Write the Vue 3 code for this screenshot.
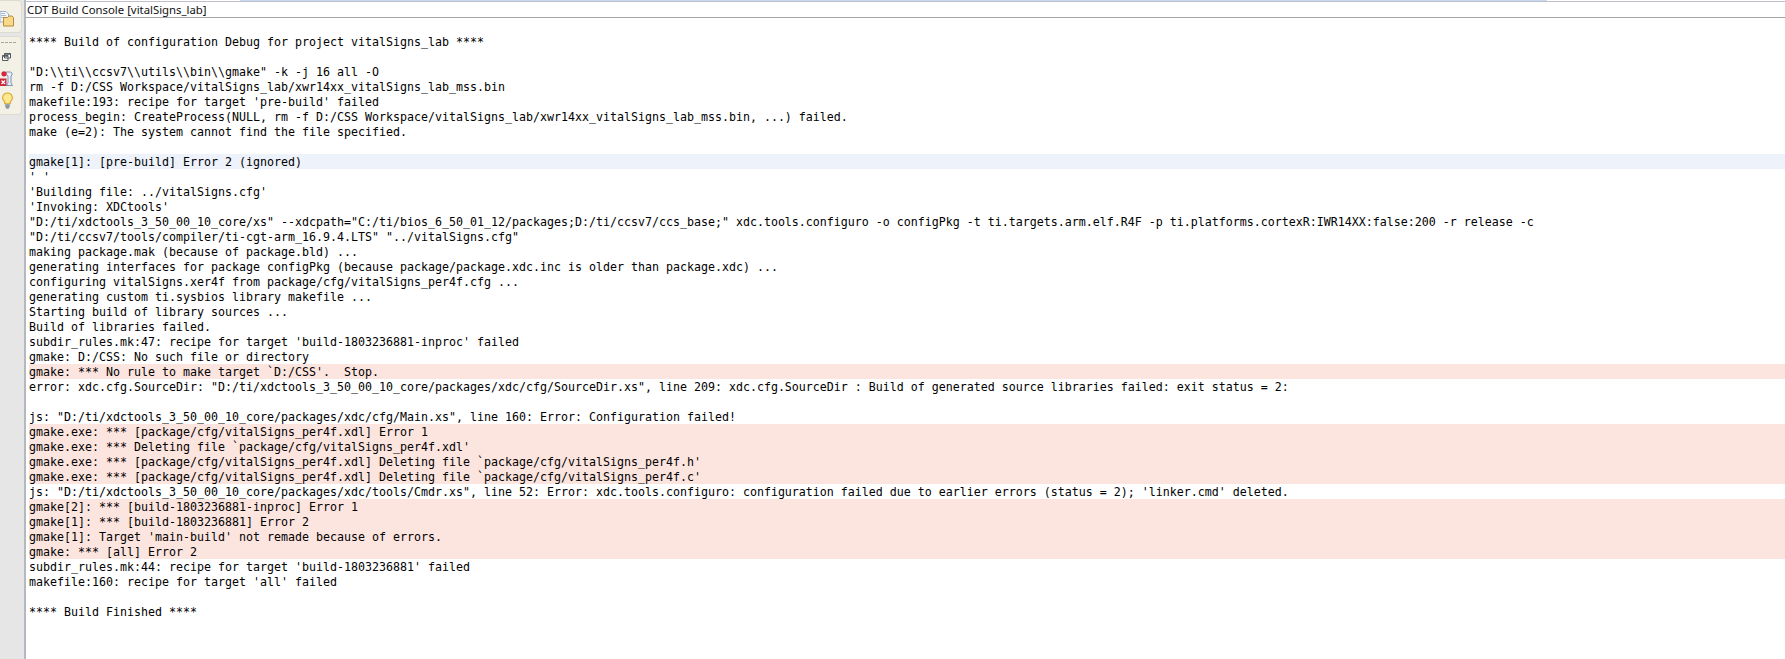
<script setup>
const lines = [
  ['**** Build of configuration Debug for project vitalSigns_lab ****', ''],
  ['', ''],
  ['"D:\\\\ti\\\\ccsv7\\\\utils\\\\bin\\\\gmake" -k -j 16 all -O', ''],
  ['rm -f D:/CSS Workspace/vitalSigns_lab/xwr14xx_vitalSigns_lab_mss.bin', ''],
  ["makefile:193: recipe for target 'pre-build' failed", ''],
  ['process_begin: CreateProcess(NULL, rm -f D:/CSS Workspace/vitalSigns_lab/xwr14xx_vitalSigns_lab_mss.bin, ...) failed.', ''],
  ['make (e=2): The system cannot find the file specified.', ''],
  ['', ''],
  ['gmake[1]: [pre-build] Error 2 (ignored)', 'warn'],
  ["' '", ''],
  ["'Building file: ../vitalSigns.cfg'", ''],
  ["'Invoking: XDCtools'", ''],
  ['"D:/ti/xdctools_3_50_00_10_core/xs" --xdcpath="C:/ti/bios_6_50_01_12/packages;D:/ti/ccsv7/ccs_base;" xdc.tools.configuro -o configPkg -t ti.targets.arm.elf.R4F -p ti.platforms.cortexR:IWR14XX:false:200 -r release -c', ''],
  ['"D:/ti/ccsv7/tools/compiler/ti-cgt-arm_16.9.4.LTS" "../vitalSigns.cfg"', ''],
  ['making package.mak (because of package.bld) ...', ''],
  ['generating interfaces for package configPkg (because package/package.xdc.inc is older than package.xdc) ...', ''],
  ['configuring vitalSigns.xer4f from package/cfg/vitalSigns_per4f.cfg ...', ''],
  ['generating custom ti.sysbios library makefile ...', ''],
  ['Starting build of library sources ...', ''],
  ['Build of libraries failed.', ''],
  ["subdir_rules.mk:47: recipe for target 'build-1803236881-inproc' failed", ''],
  ['gmake: D:/CSS: No such file or directory', ''],
  ["gmake: *** No rule to make target `D:/CSS'.  Stop.", 'err'],
  ['error: xdc.cfg.SourceDir: "D:/ti/xdctools_3_50_00_10_core/packages/xdc/cfg/SourceDir.xs", line 209: xdc.cfg.SourceDir : Build of generated source libraries failed: exit status = 2:', ''],
  ['', ''],
  ['js: "D:/ti/xdctools_3_50_00_10_core/packages/xdc/cfg/Main.xs", line 160: Error: Configuration failed!', ''],
  ['gmake.exe: *** [package/cfg/vitalSigns_per4f.xdl] Error 1', 'err'],
  ["gmake.exe: *** Deleting file `package/cfg/vitalSigns_per4f.xdl'", 'err'],
  ["gmake.exe: *** [package/cfg/vitalSigns_per4f.xdl] Deleting file `package/cfg/vitalSigns_per4f.h'", 'err'],
  ["gmake.exe: *** [package/cfg/vitalSigns_per4f.xdl] Deleting file `package/cfg/vitalSigns_per4f.c'", 'err'],
  ['js: "D:/ti/xdctools_3_50_00_10_core/packages/xdc/tools/Cmdr.xs", line 52: Error: xdc.tools.configuro: configuration failed due to earlier errors (status = 2); \'linker.cmd\' deleted.', ''],
  ['gmake[2]: *** [build-1803236881-inproc] Error 1', 'err'],
  ['gmake[1]: *** [build-1803236881] Error 2', 'err'],
  ["gmake[1]: Target 'main-build' not remade because of errors.", 'err'],
  ['gmake: *** [all] Error 2', 'err'],
  ["subdir_rules.mk:44: recipe for target 'build-1803236881' failed", ''],
  ["makefile:160: recipe for target 'all' failed", ''],
  ['', ''],
  ['**** Build Finished ****', ''],
]
</script>

<template>
  <div class="window">
    <aside class="rail">
      <div class="tray tray-top">
        <svg class="ico folder" width="15" height="16" viewBox="0 0 15 16">
          <path d="M0 .5h6l2.500 2.500v8H0z" fill="#f4f6fa" stroke="#9fb0c8" />
          <path d="M1 2.500h4M1 4.500h5M1 6.500h5" stroke="#a9bbd4" />
          <path d="M3.500 6.500h4l1.500-1.500h3l1.500 1.500v8.500h-10z" fill="#f8d98a" stroke="#b98a3a" />
        </svg>
      </div>
      <div class="tray tray-bottom">
        <div class="grip"></div>
        <svg class="ico restore" width="9" height="8" viewBox="0 0 9 8">
          <path d="M2.500 .5h6v4.500h-6z M.5 2.500h5.500v5h-5.500z" fill="#fff" stroke="#555a60" />
          <path d="M.5 2.500h5.500v1.200h-5.500z M2.500 .5h6v1.200h-6z" fill="#555a60" />
        </svg>
        <svg class="ico problems" width="13" height="16" viewBox="0 0 13 16">
          <path d="M6 1h4.500l1.500 1v2l-1 1v7l1.500 2.500h-6L8 12V5L6 3.500z" fill="#e9eef6" stroke="#7f93b5" />
          <circle cx="4" cy="2.800" r="2.600" fill="#d8263a" />
          <rect x="0" y="7.500" width="6.500" height="7.500" fill="#c9283c" />
          <path d="M1.500 9.500l3.500 3.500M5 9.500l-3.500 3.500" stroke="#fff" stroke-width="1.200" />
        </svg>
        <svg class="ico bulb" width="11" height="17" viewBox="0 0 12 18">
          <path d="M6 .8a5.200 5.200 0 0 0-3 9.500v2.200h6v-2.200A5.200 5.200 0 0 0 6 .8z" fill="#fde98e" stroke="#d8a62d" stroke-width="1.200" />
          <rect x="3.500" y="13" width="5" height="3.500" fill="#8f9aa8" />
          <rect x="4.500" y="16.500" width="3" height="1.200" fill="#5d6874" />
        </svg>
      </div>
    </aside>
    <main class="view">
      <div class="strip"></div>
      <header class="title">CDT Build Console [vitalSigns_lab]</header>
      <section class="console">
        <div v-for="(line, i) in lines" :key="i" class="line" :class="line[1]">{{ line[0] }}</div>
      </section>
    </main>
  </div>
</template>

<style scoped>
.window {
  display: flex;
  width: 1785px;
  height: 659px;
  overflow: hidden;
  background: #fff;
}
.rail {
  box-sizing: border-box;
  flex: 0 0 26px;
  display: flex;
  flex-direction: column;
  gap: 3px;
  background: #e6e6e6;
  border-right: 2px solid #b4b8bf;
}
.tray {
  box-sizing: border-box;
  width: 22px;
  background: #f3f1e6;
  border: 1px solid #dedcd0;
  border-left: 0;
  border-radius: 0 4px 4px 0;
  display: flex;
  flex-direction: column;
  align-items: flex-start;
}
.tray-top {
  height: 33px;
  justify-content: flex-start;
  padding-top: 10px;
}
.tray-bottom {
  height: 79px;
  padding-top: 5px;
}
.grip {
  width: 15px;
  margin-left: 1px;
  border-top: 1px dashed #a8a8a0;
}
.ico { display: block; flex: none; }
.restore { margin: 10px 0 0 2px; }
.problems { margin: 10px 0 0 0; }
.bulb { margin: 5px 0 0 2px; }
.view {
  flex: 1;
  min-width: 0;
}
.strip {
  width: 1307px;
  height: 1px;
  margin-left: 214px;
  background: #c9d9ee;
}
.title {
  box-sizing: border-box;
  height: 17px;
  padding: 1px 0 0 1px;
  border-top: 1px solid #c0c0cc;
  border-bottom: 1px solid #a4a4a4;
  font: 11.35px/14px "Noto Sans", sans-serif;
  color: #111;
  white-space: nowrap;
}
.console {
  padding: 16px 0 0 3px;
  font: 11.63px/15px "DejaVu Sans Mono", monospace;
  color: #000;
}
.line {
  box-sizing: border-box;
  height: 15px;
  padding-top: 1px;
  white-space: pre;
}
.warn { background: #eef3fb; }
.err { background: #fde5df; }
</style>
